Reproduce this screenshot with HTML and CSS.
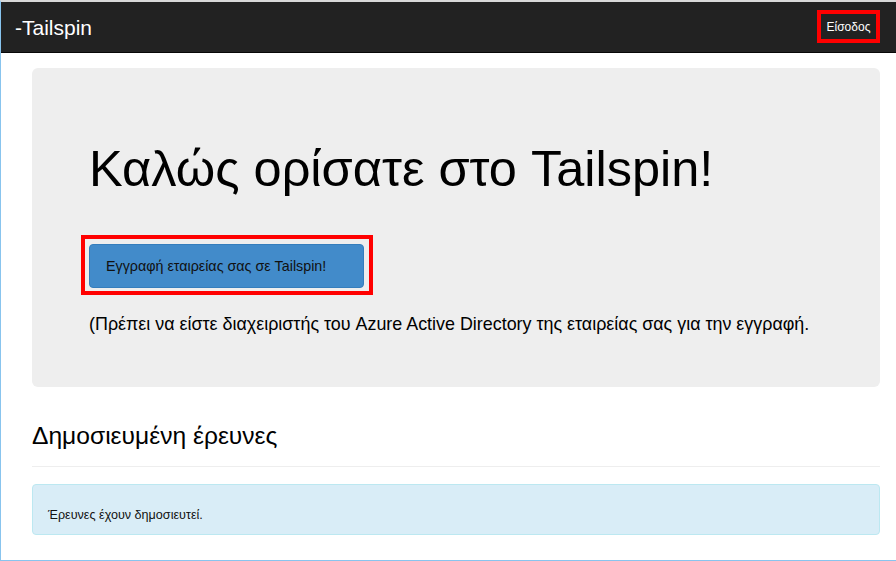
FILE: index.html
```html
<!DOCTYPE html>
<html lang="el">
<head>
<meta charset="utf-8">
<title>Tailspin</title>
<link rel="stylesheet" href="styles.css">
</head>
<body>
<div class="page">
  <header class="navbar">
    <a class="brand" href="#">-Tailspin</a>
    <a class="login" href="#">Είσοδος</a>
  </header>
  <main class="container">
    <section class="jumbotron">
      <h1 class="title">Καλώς ορίσατε στο Tailspin!</h1>
      <div class="highlight">
        <a class="btn" href="#">Εγγραφή εταιρείας σας σε Tailspin!</a>
      </div>
      <p class="lead">(Πρέπει να είστε διαχειριστής του Azure Active Directory της εταιρείας σας για την εγγραφή.</p>
    </section>
    <h2 class="section-title">Δημοσιευμένη έρευνες</h2>
    <hr class="rule">
    <div class="alert">Έρευνες έχουν δημοσιευτεί.</div>
  </main>
</div>
</body>
</html>
```
FILE: styles.css
```css
html, body {
  margin: 0;
  padding: 0;
  background: #fff;
}
body {
  font-family: "Liberation Sans", Arial, sans-serif;
  color: #111;
}
.page {
  box-sizing: border-box;
  width: 896px;
  height: 561px;
  border-top: 2px solid #d8d8d8;
  border-left: 1px solid #88c4ee;
  border-bottom: 1px solid #88c4ee;
  overflow: hidden;
}
.navbar {
  height: 50px;
  background: #222;
  border-bottom: 1px solid #080808;
  display: flex;
  align-items: center;
  justify-content: space-between;
  padding: 0 16px 0 14px;
}
.brand {
  color: #fff;
  text-decoration: none;
  font-size: 21px;
  line-height: 21px;
  margin-top: 0;
}
.login {
  box-sizing: border-box;
  height: 33px;
  width: 63px;
  border: 4px solid #f00;
  color: #fff;
  text-decoration: none;
  font-size: 12px;
  display: flex;
  align-items: center;
  justify-content: center;
  margin-top: -1px;
}
.container {
  padding: 0 16px 0 31px;
}
.jumbotron {
  margin-top: 15px;
  background: #eee;
  border-radius: 6px;
  padding: 72px 57px 51px;
}
.title {
  margin: 0;
  font-weight: normal;
  font-size: 50.5px;
  line-height: 57px;
  color: #000;
  margin-left: 0;
}
.highlight {
  margin-top: 38px;
  margin-left: -8px;
  display: inline-block;
  border: 4px solid #f00;
  padding: 5px 5px 3px 4px;
}
.btn {
  box-sizing: border-box;
  display: flex;
  align-items: center;
  width: 275px;
  height: 44px;
  padding: 0 16px;
  background: #428bca;
  border: 1px solid #357ebd;
  border-radius: 4px;
  color: #111;
  text-decoration: none;
  font-size: 14.3px;
}
.lead {
  margin: 17px 0 0;
  font-size: 17.9px;
  line-height: 24px;
  color: #000;
}
.section-title {
  margin: 35px 0 0;
  font-weight: normal;
  font-size: 24.6px;
  line-height: 28px;
  color: #000;
}
.rule {
  margin: 16px 0 0;
  border: 0;
  border-top: 1px solid #eee;
  height: 0;
}
.alert {
  margin-top: 17px;
  height: 51px;
  box-sizing: border-box;
  background: #d9edf7;
  border: 1px solid #bce8f1;
  border-radius: 4px;
  padding: 23px 15px 0;
  font-size: 12.6px;
  color: #111;
}
```
